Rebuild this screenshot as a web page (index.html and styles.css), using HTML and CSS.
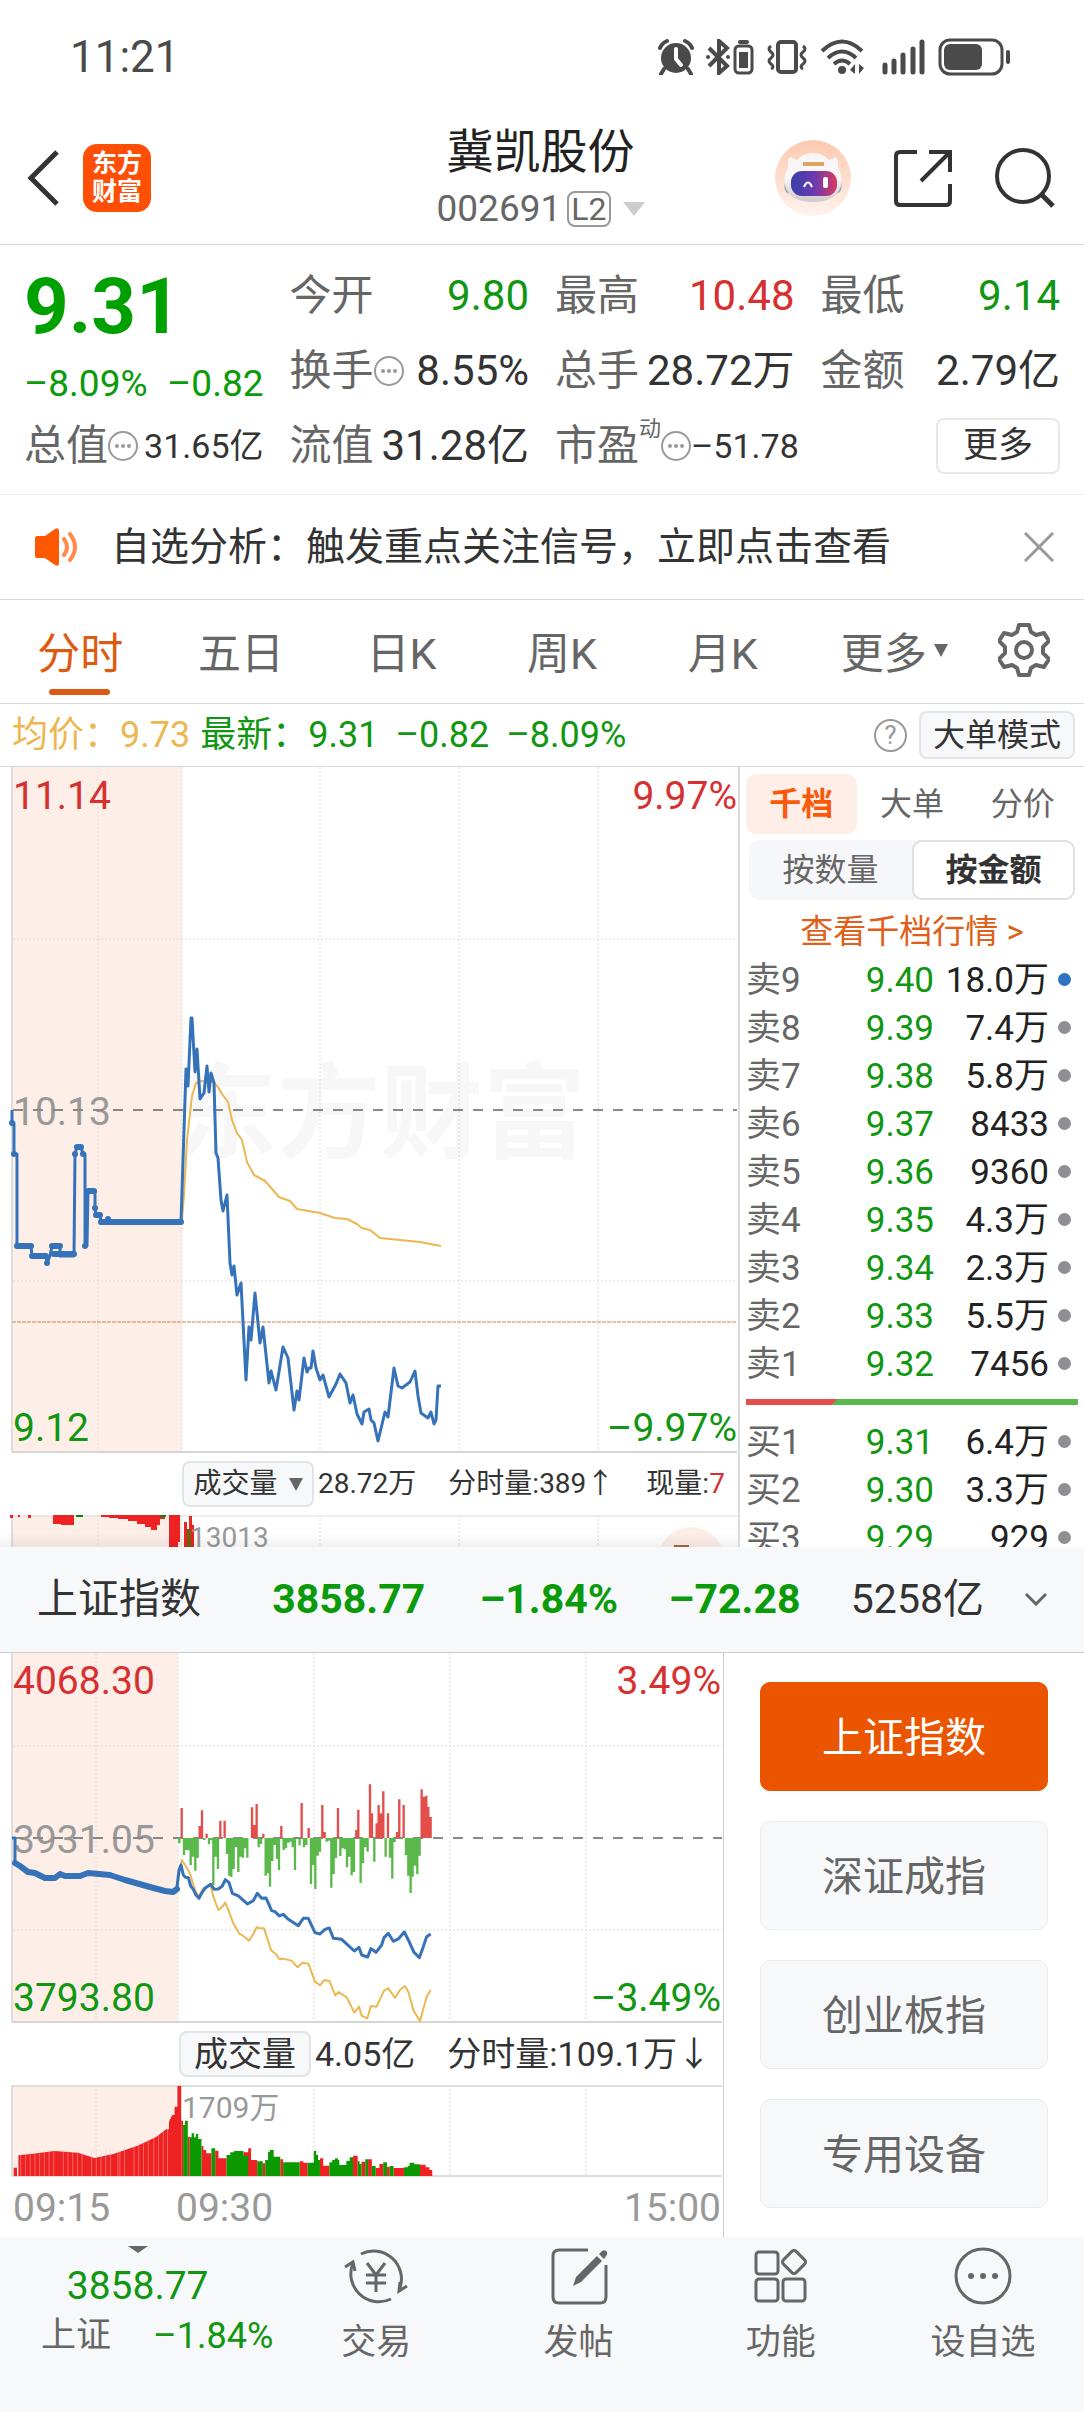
FILE: index.html
```html
<!DOCTYPE html>
<html lang="zh-CN">
<head>
<meta charset="utf-8">
<meta name="viewport" content="width=device-width, initial-scale=1">
<title>冀凯股份 002691</title>
<link rel="stylesheet" href="styles.css">
</head>
<body>
<div class="status">
  <span class="clock">11:21</span>
  <div class="status-icons">
    <svg width="36" height="36" viewBox="0 0 36 36"><circle cx="18" cy="19" r="15" fill="#4a4a4a"/><path d="M6 30l-3 5M30 30l3 5M2 9q2-5 7-7M34 9q-2-5-7-7" stroke="#4a4a4a" stroke-width="4" fill="none" stroke-linecap="round"/><path d="M18 10v10l5 6" stroke="#fff" stroke-width="4" fill="none" stroke-linecap="round"/></svg>
    <svg class="gap-m" width="48" height="36" viewBox="0 0 48 36"><path d="M3 9l18 18-8 7V2l8 7L3 27" fill="none" stroke="#4a4a4a" stroke-width="4"/><circle cx="2" cy="18" r="2" fill="#4a4a4a"/><circle cx="22" cy="18" r="2" fill="#4a4a4a"/><rect x="29" y="7" width="17" height="27" rx="4" fill="none" stroke="#4a4a4a" stroke-width="3"/><rect x="33" y="13" width="9" height="16" fill="#4a4a4a"/><rect x="32" y="1" width="11" height="4" rx="2" fill="#4a4a4a"/></svg>
    <svg class="gap-m" width="42" height="36" viewBox="0 0 42 36"><rect x="12" y="3" width="18" height="30" rx="3" fill="none" stroke="#4a4a4a" stroke-width="4"/><path d="M5 7q-4 3 0 6t0 6 0 6 0 5M37 7q4 3 0 6t0 6 0 6 0 5" fill="none" stroke="#4a4a4a" stroke-width="3"/></svg>
    <svg class="gap-m" width="44" height="36" viewBox="0 0 44 36"><path d="M2 12q20-19 40 0M8 19q14-13 28 0M14 25q8-7 16 0" fill="none" stroke="#4a4a4a" stroke-width="4"/><circle cx="22" cy="31" r="4" fill="#4a4a4a"/><path d="M30 31l5-6v10zM44 29l-5 6V25z" fill="#4a4a4a"/></svg>
    <svg class="gap-l" width="44" height="36" viewBox="0 0 44 36"><path d="M3 26v7M12 22v11M21 16v17M31 10v23M40 3v30" stroke="#4a4a4a" stroke-width="5" stroke-linecap="round"/></svg>
    <svg class="gap-m" width="74" height="38" viewBox="0 0 74 38"><rect x="2" y="2" width="62" height="34" rx="10" fill="none" stroke="#4a4a4a" stroke-width="3"/><rect x="6" y="6" width="38" height="26" rx="6" fill="#4a4a4a"/><path d="M70 14v10" stroke="#4a4a4a" stroke-width="4" stroke-linecap="round"/></svg>
  </div>
</div>

<header class="header">
  <div class="header-left">
    <button class="icon-btn" aria-label="返回"><svg width="34" height="56" viewBox="0 0 34 56"><path d="M31 2L5 28l26 26" fill="none" stroke="#333" stroke-width="5"/></svg></button>
    <a class="logo" href="#"><span>东方</span><span>财富</span></a>
  </div>
  <div class="title">
    <h1>冀凯股份</h1>
    <button class="code">002691<span class="l2">L2</span><i class="tri tri-light"></i></button>
  </div>
  <div class="header-right">
    <button class="icon-btn" aria-label="助手"><svg width="76" height="76" viewBox="0 0 76 76"><defs><linearGradient id="halo" x1="0" y1="0" x2="0" y2="1"><stop offset="0" stop-color="#fcc9af"/><stop offset="1" stop-color="#fff3ed"/></linearGradient><linearGradient id="visor"><stop offset="0" stop-color="#3a3fa8"/><stop offset=".5" stop-color="#6a3ab0"/><stop offset="1" stop-color="#d83a5e"/></linearGradient><linearGradient id="shell" x1="0" y1="0" x2="0" y2="1"><stop offset=".5" stop-color="#f8f5f7"/><stop offset="1" stop-color="#cfc8ce"/></linearGradient></defs><circle cx="38" cy="38" r="38" fill="url(#halo)"/><path d="M11 38q-5 16 6 16zM65 38q5 16-6 16z" fill="#9aa0ac"/><path d="M13 28q-1-8 2-11l7 3q6-7 16-7t16 7l7-3q3 3 2 11 5 8 3 18-5 16-28 16T10 46q-2-10 3-18z" fill="url(#shell)"/><rect x="28" y="22" width="21" height="4" fill="#dba367"/><rect x="16" y="31" width="46" height="25" rx="11" fill="url(#visor)"/><path d="M29 47q4-9 8 0" fill="none" stroke="#fff" stroke-width="2"/><rect x="48" y="37" width="5" height="11" rx="2" fill="#fff"/></svg></button>
    <button class="icon-btn" aria-label="分享"><svg width="60" height="60" viewBox="0 0 60 60"><path d="M24 4H7q-4 0-4 4v45q0 4 4 4h46q4 0 4-4V36M36 4h21v20M57 4L28 33" fill="none" stroke="#333" stroke-width="4"/></svg></button>
    <button class="icon-btn" aria-label="搜索"><svg width="60" height="60" viewBox="0 0 60 60"><circle cx="28" cy="28" r="26" fill="none" stroke="#333" stroke-width="4"/><path d="M46 46l12 12" stroke="#333" stroke-width="5"/></svg></button>
  </div>
</header>

<section class="quote">
  <div class="price"><strong>9.31</strong><div><span>–8.09%</span><span>–0.82</span></div></div>
  <div class="cell"><span>今开</span><b class="down">9.80</b></div>
  <div class="cell"><span>最高</span><b class="up">10.48</b></div>
  <div class="cell"><span>最低</span><b class="down">9.14</b></div>
  <div class="cell"><span>换手<svg class="dots" viewBox="0 0 30 30"><use href="#more-dots"/></svg></span><b>8.55%</b></div>
  <div class="cell"><span>总手</span><b>28.72万</b></div>
  <div class="cell"><span>金额</span><b>2.79亿</b></div>
  <div class="cell"><span>总值<svg class="dots" viewBox="0 0 30 30"><g id="more-dots"><circle cx="15" cy="15" r="14" fill="none" stroke="#999" stroke-width="2"/><circle cx="9" cy="15" r="2" fill="#999"/><circle cx="15" cy="15" r="2" fill="#999"/><circle cx="21" cy="15" r="2" fill="#999"/></g></svg></span><b class="small">31.65亿</b></div>
  <div class="cell"><span>流值</span><b>31.28亿</b></div>
  <div class="cell"><span>市盈<sup>动</sup><svg class="dots" viewBox="0 0 30 30"><use href="#more-dots"/></svg></span><b class="small">–51.78</b></div>
  <div class="cell cell-end"><button class="more">更多</button></div>
</section>

<section class="notice">
  <svg width="46" height="38" viewBox="0 0 46 38"><path d="M2 10q0-2 2-2h8L22 1q4-2 4 2v32q0 4-4 2l-10-7H4q-2 0-2-2z" fill="#ff5800"/><path d="M31 11q6 8 0 16M37 6q10 13 0 26" fill="none" stroke="#ff8a4a" stroke-width="4" stroke-linecap="round"/></svg>
  <a href="#">自选分析：触发重点关注信号，立即点击查看</a>
  <button class="icon-btn" aria-label="关闭"><svg width="30" height="30" viewBox="0 0 30 30"><path d="M1 1l28 28M29 1L1 29" stroke="#999" stroke-width="3"/></svg></button>
</section>

<nav class="tabs">
  <button class="active">分时</button>
  <button>五日</button>
  <button>日K</button>
  <button>周K</button>
  <button>月K</button>
  <button>更多<i class="tri tri-dark"></i></button>
  <button aria-label="设置"><svg width="52" height="54" viewBox="0 0 52 54"><path d="M21 2h10l2 7 5 3 8-2 5 8-6 6v6l6 6-5 8-8-2-5 3-2 7H21l-2-7-5-3-8 2-5-8 6-6v-6l-6-6 5-8 8 2 5-3z" fill="none" stroke="#666" stroke-width="4" stroke-linejoin="round"/><circle cx="26" cy="27" r="8" fill="none" stroke="#666" stroke-width="4"/></svg></button>
</nav>

<div class="info">
  <span class="avg">均价：9.73</span>
  <span class="down latest"><span>最新：9.31</span><span>–0.82</span><span>–8.09%</span></span>
  <button class="help" aria-label="帮助">?</button>
  <button class="mode">大单模式</button>
</div>

<main class="board">
  <div class="board-chart">
    <svg class="chart" viewBox="0 767 738 686" role="img" aria-label="冀凯股份分时图">
      <rect x="13" y="767" width="169" height="685" fill="#fdeee8"/>
      <text x="174" y="1150" class="mark">东方财富</text>
      <path class="grid" d="M98 767V1452M182 767V1452M320 767V1452M459 767V1452M598 767V1452M13 939H737M13 1281H737"/>
      <path d="M12 767V1452" stroke="#ddd" stroke-width="2"/>
      <path d="M12 1452H737" stroke="#d5d5d5" stroke-width="2"/>
      <text x="13" y="1125" class="mid">10.13</text>
      <path d="M13 1110H737" stroke="#888" stroke-width="2" stroke-dasharray="10 10"/>
      <path d="M12 1322H737" stroke="#c8854c" stroke-width="1" stroke-dasharray="4 1"/>
      <path class="avg-line" d="M182 1220L184 1195 187 1140 192 1096 196 1083 201 1081 213 1082 218 1087 222 1094 228 1102 232 1120 237 1133 242 1140 247 1162 254 1175 265 1181 279 1197 290 1201 297 1209 320 1213 335 1218 347 1219 357 1224 362 1228 370 1230 380 1238 400 1240 420 1242 441 1246"/>
      <path class="price-line" d="M12 1110V1123H14V1154H17V1246H31L32 1256H46L47 1263 50 1256 52 1246H60V1256H74L75 1154 77 1147H81L83 1154H85V1246H87L88 1191H95V1208L96 1215H100L101 1222H181L186 1069 188 1086 191 1018 192 1018 195 1072 197 1049 200 1099 204 1093 207 1066 209 1092 211 1073 214 1083 216 1153 218 1158 221 1200 223 1211 227 1195 230 1263 232 1275 234 1266 237 1295 241 1283 246 1380 249 1327 251 1340 255 1293 260 1343 263 1327 269 1383 271 1371 276 1390 283 1347 288 1358 294 1410 297 1391 299 1400 304 1358 307 1372 309 1368 311 1368 313 1351 316 1368 320 1380 323 1375 329 1397 336 1384 340 1374 346 1383 350 1403 353 1395 357 1414 362 1424 364 1412 369 1409 371 1420 374 1423 378 1441 385 1412 388 1417 394 1368 398 1386 402 1388 410 1382 415 1371 418 1396 421 1413 428 1418 431 1412 434 1424 436 1420 438 1386 441 1386"/>
      <path class="dots-line" d="M12 1123h0M14 1154h0M17 1246H31M32 1256H46M47 1263h0M52 1246H60M54 1254H74M75 1154h0M77 1147H81M83 1154h0M85 1246h0M88 1191H94M95 1208h0M96 1215H100M101 1222H181M108 1219h0"/>
      <text x="13" y="809" class="axis red">11.14</text>
      <text x="737" y="809" class="axis red end">9.97%</text>
      <text x="13" y="1441" class="axis green">9.12</text>
      <text x="737" y="1441" class="axis green end">–9.97%</text>
    </svg>
    <div class="vol-head">
      <button class="chip">成交量<i class="tri tri-dark"></i></button>
      <span>28.72万</span><span class="gap-xl">分时量:389↑</span><span class="gap-xl">现量:<em>7</em></span>
    </div>
    <svg class="chart" viewBox="0 1515 738 32" role="img" aria-label="成交量">
      <defs><linearGradient id="fade" x1="0" y1="0" x2="0" y2="1"><stop offset="0" stop-color="#000" stop-opacity="0"/><stop offset="1" stop-color="#000" stop-opacity=".06"/></linearGradient></defs>
      <rect x="13" y="1515" width="169" height="32" fill="#fdeee8"/>
      <path class="grid" d="M98 1515V1547M182 1515V1547M320 1515V1547M459 1515V1547M598 1515V1547"/>
      <path d="M12 1515V1547" stroke="#ddd" stroke-width="2"/>
      <path d="M12 1516H738" stroke="#ddd"/>
      <path fill="#ee2222" d="M10 1515h3v3h-3zM18 1515h2v2h-2zM28 1515h3v3h-3zM53 1515h21v10H61v-1h-8zM101 1515H165V1519H160V1525H157V1530H151V1527H145V1524H137V1521H128V1519H118V1518H109V1517H101zM169 1515h11v27h-2v5h-9zM184 1522h3v25h-3zM189 1516h3v9h2v22h-5z"/>
      <path fill="#008a00" d="M76 1515h7v2h-7zM160 1515h6v2h-6z"/><path fill="#6d6412" d="M187 1529h4v18h-4z"/>
      <text x="190" y="1547" class="tick">13013</text>
      <circle cx="691" cy="1560" r="33" fill="#fdeee8"/><rect x="674" y="1545" width="15" height="2" fill="#a5683e"/>
      <rect x="0" y="1533" width="738" height="14" fill="url(#fade)"/>
    </svg>
  </div>

  <aside class="book">
    <div class="book-tabs"><button class="active">千档</button><button>大单</button><button>分价</button></div>
    <div class="segment"><button>按数量</button><button class="active">按金额</button></div>
    <a class="book-link" href="#">查看千档行情 &gt;</a>
    <table>
      <tr><th>卖9</th><td class="down">9.40</td><td>18.0万</td><td><i class="dot blue"></i></td></tr>
      <tr><th>卖8</th><td class="down">9.39</td><td>7.4万</td><td><i class="dot"></i></td></tr>
      <tr><th>卖7</th><td class="down">9.38</td><td>5.8万</td><td><i class="dot"></i></td></tr>
      <tr><th>卖6</th><td class="down">9.37</td><td>8433</td><td><i class="dot"></i></td></tr>
      <tr><th>卖5</th><td class="down">9.36</td><td>9360</td><td><i class="dot"></i></td></tr>
      <tr><th>卖4</th><td class="down">9.35</td><td>4.3万</td><td><i class="dot"></i></td></tr>
      <tr><th>卖3</th><td class="down">9.34</td><td>2.3万</td><td><i class="dot"></i></td></tr>
      <tr><th>卖2</th><td class="down">9.33</td><td>5.5万</td><td><i class="dot"></i></td></tr>
      <tr><th>卖1</th><td class="down">9.32</td><td>7456</td><td><i class="dot"></i></td></tr>
    </table>
    <div class="ratio"></div>
    <table>
      <tr><th>买1</th><td class="down">9.31</td><td>6.4万</td><td><i class="dot"></i></td></tr>
      <tr><th>买2</th><td class="down">9.30</td><td>3.3万</td><td><i class="dot"></i></td></tr>
      <tr><th>买3</th><td class="down">9.29</td><td>929</td><td><i class="dot"></i></td></tr>
    </table>
  </aside>
</main>

<section class="index-bar">
  <span>上证指数</span><b>3858.77</b><b>–1.84%</b><b>–72.28</b><span>5258亿</span>
  <button class="icon-btn" aria-label="收起"><svg width="24" height="14" viewBox="0 0 24 14"><path d="M2 2l10 10L22 2" fill="none" stroke="#666" stroke-width="3"/></svg></button>
</section>

<section class="index">
  <div class="index-chart">
    <svg class="chart" viewBox="0 1653 723 370" role="img" aria-label="上证指数分时图">
      <rect x="13" y="1653" width="165" height="369" fill="#fdeee8"/>
      <path class="grid" d="M96 1653V2022M178 1653V2022M314 1653V2022M450 1653V2022M586 1653V2022M13 1746H722M13 1930H722"/>
      <path d="M12 1653V2022" stroke="#ddd" stroke-width="2"/>
      <path d="M12 2022H722" stroke="#d5d5d5" stroke-width="2"/>
      <text x="13" y="1853" class="mid">3931.05</text>
      <path d="M13 1838H722" stroke="#888" stroke-width="2" stroke-dasharray="10 10"/>
      <g transform="translate(160 1760) scale(.3333)">
        <path stroke="#5ab94a" stroke-width="7" d="M58 234V250M72 234V285M79 234V270M85 234V270M92 234V315M99 234V290M106 234V332M113 234V294M133 234V240M147 234V253M153 234V240M160 234V375M167 234V290M174 234V327M201 234V282M208 234V347M214 234V351M221 234V327M228 234V262M235 234V336M242 234V290M249 234V293M255 234V265M262 234V293M296 234V262M303 234V252M317 234V347M323 234V340M330 234V380M337 234V303M344 234V255M351 234V297M357 234V330M371 234V270M378 234V265M385 234V248M391 234V245M398 234V262M405 234V330M419 234V256M432 234V262M439 234V255M453 234V372M460 234V315M466 234V387M473 234V287M480 234V275M500 234V245M507 234V242M514 234V383M521 234V342M528 234V295M541 234V288M548 234V265M555 234V268M561 234V322M568 234V290M575 234V346M582 234V336M602 234V369M609 234V310M616 234V262M623 234V275M643 234V305M677 234V290M690 234V293M697 234V356M704 234V246M724 234V238M738 234V285M745 234V347M752 234V399M758 234V350M765 234V317M772 234V342M779 234V287"/>
        <path stroke="#e34d4a" stroke-width="7" d="M65 234V144M119 234V198M126 234V151M140 234V221M181 234V182M194 234V182M276 234V142M283 234V195M290 234V132M310 234V221M364 234V198M425 234V129M446 234V204M487 234V135M494 234V216M534 234V144M589 234V210M595 234V149M630 234V73M636 234V160M650 234V190M656 234V135M663 234V160M670 234V94M684 234V160M711 234V216M718 234V118M731 234V135M785 234V88M792 234V110M799 234V107M805 234V140M812 234V171"/>
        <path fill="none" stroke="#ecb751" stroke-width="6" stroke-linejoin="round" d="M52 375L65 300 75 315 90 340 100 375 108 397 117 408 130 385 152 375 160 410 175 450 187 440 196 428 205 450 220 490 237 520 250 528 267 542 280 522 290 502 300 505 312 505 325 545 333 570 350 585 358 598 368 596 395 602 413 622 427 608 445 611 465 665 480 676 492 661 508 662 526 706 536 696 560 712 583 758 597 740 605 767 622 775 633 738 650 740 672 692 685 685 705 714 720 690 735 678 745 695 760 750 780 784 800 710 812 690"/>
        <path fill="none" stroke="#3672b9" stroke-width="9" stroke-linejoin="round" d="M50 390L57 330 63 315 70 345 76 352 85 353 92 378 100 388 108 405 117 415 126 398 135 385 152 373 163 388 175 387 187 378 196 359 207 368 217 400 235 408 262 432 280 422 292 400 305 415 318 414 335 452 345 455 358 468 370 463 385 478 415 497 430 475 445 475 465 518 480 522 495 508 508 504 520 535 545 538 583 573 597 562 605 585 623 591 633 566 648 577 665 555 672 533 685 520 700 544 715 537 733 516 745 540 762 577 778 593 790 560 800 530 812 522"/>
      </g>
      <path class="price-line" d="M12 1838H15V1863"/>
      <path class="dots-line" d="M15 1863L20 1866 28 1872 35 1873 45 1878 55 1878 60 1874 65 1876 80 1876 88 1873 110 1875 125 1880 150 1887 165 1891 173 1892 177 1889"/>
      <text x="13" y="1694" class="axis red">4068.30</text>
      <text x="721" y="1694" class="axis red end">3.49%</text>
      <text x="13" y="2011" class="axis green">3793.80</text>
      <text x="721" y="2011" class="axis green end">–3.49%</text>
    </svg>
    <div class="vol-head vol-head-lg">
      <button class="chip">成交量</button>
      <span>4.05亿</span><span class="gap-xl">分时量:109.1万↓</span>
    </div>
    <svg class="chart" viewBox="0 2085 723 152" role="img" aria-label="上证成交量">
      <rect x="13" y="2085" width="165" height="91" fill="#fdeee8"/>
      <path class="grid" d="M96 2085V2176M178 2085V2176M314 2085V2176M450 2085V2176M586 2085V2176"/>
      <path d="M12 2085V2176" stroke="#ddd" stroke-width="2"/>
      <path d="M12 2086H722M12 2176H722" stroke="#ddd" stroke-width="2"/>
      <g transform="translate(0 2000) scale(.4719 .3333)">
        <path fill="#ee2222" d="M29 503h7v25h-7zM39 528V466L70 461 115 453 165 458 200 474 240 462 290 438 330 412 352 388H358V365L365 345H370V320H376V258H384V528z"/>
        <path stroke="#f9c9c3" stroke-width="1" d="M44 455V528M54 455V528M64 455V528M74 455V528M84 450V528M94 450V528M104 450V528M114 450V528M134 450V528M144 450V528M154 450V528M164 450V528M174 450V528M194 450V528M204 450V528M214 450V528M224 450V528M234 450V528M250 450V528M254 450V528M264 440V528M284 440V528M294 430V528M304 430V528M314 420V528M326 410V528M336 400V528M346 390V528M355 380V528"/>
        <path fill="#ee2222" d="M384 528V362h4V528zM398 528V410h4V528zM427 528V438h4V450h6V460h11V528zM456 528V452h7V475h17V528zM516 528V457h10V445h6V480h13V528zM557 528V490h5V528zM594 528V478h6V528zM635 528V484h8V488h9V528zM678 528V475h7V497h13V528zM748 528V467h10V528zM766 528V485h8V528zM780 528V478h8V528zM796 528V504h8V492h8V528zM820 528V500h6V528zM834 528V504h22V528zM890 528V494h12V502h8V510h6V528z"/>
        <path fill="#0a9a00" d="M388 528V375h4V362h6V528zM402 528V412h4V400h5V412h4V402h5V417h7V528zM448 528V445h8V528zM480 528V465h8V457h8V453h20V467H526V528zM545 528V484h12V528zM562 528V480h6V455h4V450h8V470h14V528zM600 528V487h35V528zM652 528V488h13V453h5V465h4V480h4V528zM698 528V487h6V480h6V475h6V480h3V495h15V483h7V472h7V528zM758 528V484h4V492h4V528zM774 528V478h6V528zM788 528V498h8V528zM812 528V487h8V528zM826 528V498h8V528zM856 528V502h8V498h4V488h10V493h12V528z"/>
      </g>
      <text x="182" y="2118" class="tick tick-lg">1709万</text>
      <text x="13" y="2221" class="mid">09:15</text>
      <text x="176" y="2221" class="mid">09:30</text>
      <text x="721" y="2221" class="mid end">15:00</text>
    </svg>
  </div>
  <div class="index-list">
    <button class="active">上证指数</button>
    <button>深证成指</button>
    <button>创业板指</button>
    <button>专用设备</button>
  </div>
</section>

<footer class="dock">
  <a class="dock-index" href="#"><i class="tri tri-dark"></i><span class="down">3858.77</span><span class="dock-row"><span>上证</span><span class="down">–1.84%</span></span></a>
  <a href="#"><svg width="64" height="60" viewBox="0 0 64 60"><path d="M17 8A28 28 0 0 1 56 42M47 53A28 28 0 0 1 9 17" fill="none" stroke="#666" stroke-width="3"/><path d="M1 21l8-5 2 9M63 40l-8 5 1-9" fill="none" stroke="#666" stroke-width="3"/><path d="M23 17l9 12 9-12M22 29h20M22 37h20M32 29v17" fill="none" stroke="#666" stroke-width="3"/></svg>交易</a>
  <a href="#"><svg width="60" height="60" viewBox="0 0 60 60"><path d="M39 4H10Q4 4 4 10v41q0 6 6 6h41q6 0 6-6V19" fill="none" stroke="#666" stroke-width="3"/><path d="M24 40l3-9L48 10l5 5-21 21zM50 8l3-3q3-2 5 1 1 2-1 4l-2 3z" fill="#666"/></svg>发帖</a>
  <a href="#"><svg width="60" height="60" viewBox="0 0 60 60"><g fill="none" stroke="#666" stroke-width="3"><rect x="5" y="6" width="22" height="22" rx="3"/><rect x="5" y="33" width="22" height="22" rx="3"/><rect x="32" y="33" width="22" height="22" rx="3"/><rect x="34" y="7" width="18" height="18" rx="3" transform="rotate(45 43 16)"/></g></svg>功能</a>
  <a href="#"><svg width="60" height="60" viewBox="0 0 60 60"><circle cx="30" cy="30" r="27" fill="none" stroke="#666" stroke-width="3"/><circle cx="18" cy="30" r="3" fill="#666"/><circle cx="30" cy="30" r="3" fill="#666"/><circle cx="42" cy="30" r="3" fill="#666"/></svg>设自选</a>
</footer>
</body>
</html>
```
FILE: styles.css
```css
* { box-sizing: border-box; }
body { display: flex; flex-direction: column; min-height: 100vh; margin: 0; background: #fff; color: #333; font-family: Roboto, "Noto Sans CJK SC", sans-serif; }
button { margin: 0; padding: 0; border: 0; background: none; font: inherit; color: inherit; }
a { color: inherit; text-decoration: none; }
svg { display: block; flex: none; }
b { font-weight: 400; }
em { font-style: normal; color: #d63030; }
.up { color: #d63030; }
.down { color: #109610; }
.icon-btn { display: flex; }
.tri { width: 0; height: 0; border: solid transparent; border-width: 13px 7px 0; border-top-color: #666; }
.tri-light { border-width: 14px 11px 0; border-top-color: #ccc; }

.status { display: flex; align-items: center; justify-content: space-between; height: 114px; padding: 0 72px 0 70px; color: #4a4a4a; }
.clock { font-size: 44px; line-height: 52px; }
.status-icons { display: flex; align-items: center; }
.gap-m { margin-left: 12px; }
.gap-l { margin-left: 18px; }

.header { display: grid; grid-template-columns: 1fr auto 1fr; align-items: center; padding: 7px 29px 9px 26px; border-bottom: 1px solid #d8d8d8; }
.header-left, .header-right { display: flex; align-items: center; }
.header-left { gap: 23px; }
.header-right { justify-content: flex-end; gap: 42px; }
.logo { display: flex; flex-direction: column; align-items: center; justify-content: center; width: 68px; height: 68px; border-radius: 14px; background: #ff4f06; color: #fff; font-size: 25px; font-weight: 700; line-height: 28px; }
.title { display: flex; flex-direction: column; align-items: center; }
.title h1 { margin: 0; font-size: 47px; font-weight: 400; line-height: 62px; color: #222; }
.code { display: flex; align-items: center; font-size: 37px; line-height: 52px; color: #666; }
.l2 { margin: 0 12px 0 6px; padding: 0 2px; border: 2px solid #999; border-radius: 8px; font-size: 32px; line-height: 32px; }

.quote { display: grid; grid-template-columns: repeat(4, minmax(0, 1fr)); grid-auto-rows: 75px; column-gap: 26px; padding: 13px 24px 11px; border-bottom: 1px solid #eee; }
.price { grid-row: span 2; display: flex; flex-direction: column; color: #0a9a0a; }
.price strong { font-size: 78px; line-height: 98px; color: #00a000; }
.price div { display: flex; justify-content: space-between; font-size: 37px; line-height: 56px; }
.cell { display: flex; align-items: center; justify-content: space-between; font-size: 42px; line-height: 60px; white-space: nowrap; }
.cell > span { display: flex; align-items: center; color: #666; }
.cell .small { font-size: 34px; }
.cell sup { align-self: flex-start; font-size: 22px; line-height: 26px; }
.cell-end { justify-content: flex-end; }
.dots { width: 30px; height: 30px; }
.more { width: 124px; height: 56px; border: 2px solid #e8e8e8; border-radius: 8px; font-size: 35px; line-height: 50px; }

.notice { display: flex; align-items: center; gap: 32px; padding: 22px 30px 22px 33px; border-bottom: 1px solid #d8d8d8; font-size: 39px; line-height: 60px; }
.notice a { flex: 1; }

.tabs { display: grid; grid-template-columns: repeat(5, 160fr) 182fr 76fr; padding-right: 22px; border-bottom: 1px solid #d8d8d8; }
.tabs button { position: relative; display: flex; align-items: center; justify-content: center; gap: 7px; height: 103px; padding-bottom: 3px; font-size: 43px; color: #666; }
.tabs .active { color: #dd5a12; }
.tabs .active::after { content: ""; position: absolute; bottom: 8px; left: calc(50% - 31px); width: 61px; height: 6px; border-radius: 3px; background: #dd5a12; }

.info { display: flex; align-items: center; padding: 7px 9px 7px 12px; border-bottom: 1px solid #d8d8d8; font-size: 36px; line-height: 48px; }
.avg { margin-right: 10px; color: #ecb751; }
.latest { display: flex; flex: 1; gap: 17px; }
.help { width: 33px; height: 33px; margin-right: 12px; border: 2px solid #999; border-radius: 50%; font-size: 26px; line-height: 28px; color: #999; }
.mode { width: 156px; height: 48px; border: 2px solid #e2e4e8; border-radius: 8px; background: #f7f8fa; font-size: 32px; line-height: 42px; }

.board { display: grid; grid-template-columns: minmax(0, 738fr) minmax(0, 346fr); }
.chart { width: 100%; height: auto; }
.grid { fill: none; stroke: #dcdcdc; stroke-width: 1; stroke-dasharray: 2 2; }
.price-line, .avg-line, .dots-line { fill: none; stroke: #3672b9; stroke-width: 3; stroke-linejoin: round; }
.avg-line { stroke: #ecb751; stroke-width: 2; }
.dots-line { stroke-width: 6; stroke-linecap: round; }
.axis, .mid { font-size: 39px; }
.mid, .tick { fill: #999; }
.red { fill: #d63030; }
.green { fill: #109610; }
.end { text-anchor: end; }
.tick { font-size: 28px; }
.tick-lg { font-size: 30px; }
.mark { font-size: 103px; font-weight: 700; fill: #f7f7f7; }
.vol-head { display: flex; align-items: center; padding: 8px 0; padding-left: 182px; font-size: 28px; line-height: 46px; white-space: nowrap; }
.vol-head .chip { display: flex; align-items: center; justify-content: center; gap: 11px; width: 132px; height: 46px; margin-right: 4px; border: 2px solid #e2e4e8; border-radius: 8px; background: #f7f8fa; }
.vol-head .gap-xl { margin-left: 32px; }
.vol-head-lg { padding-left: 179px; font-size: 34px; }

.book { contain: size; overflow: hidden; padding: 7px 6px 0; border-left: 2px solid #dcdcdc; }
.book-tabs { display: grid; grid-template-columns: repeat(3, 1fr); font-size: 32px; line-height: 60px; color: #666; }
.book-tabs .active { border-radius: 10px; background: #feeee7; font-weight: 700; color: #f95a0a; }
.segment { display: grid; grid-template-columns: 1fr 1fr; margin: 6px 3px; border-radius: 10px; background: #f6f7fa; font-size: 32px; line-height: 56px; color: #666; }
.segment button { height: 60px; }
.segment .active { border: 2px solid #e0e0e0; border-radius: 10px; background: #fff; font-weight: 700; color: #333; }
.book-link { display: block; padding: 3px 0; font-size: 33px; line-height: 45px; text-align: center; color: #e0601a; }
.book table { width: 100%; table-layout: fixed; border-collapse: collapse; font-size: 35px; line-height: 48px; color: #222; }
.book th, .book td { height: 48px; padding: 0; font-weight: 400; text-align: right; white-space: nowrap; }
.book th { width: 75px; text-align: left; color: #666; }
.book td:last-child { width: 29px; }
.book td:nth-child(2) { width: 113px; }
.book .down { color: #109610; }
.dot { display: block; width: 13px; height: 13px; margin: 0 7px 4px auto; border-radius: 50%; background: #8e8e93; }
.blue { background: #2f72c4; }
.ratio { height: 6px; margin: 10px 0 14px; background: linear-gradient(135deg, #e34d4a 0 27%, #5ab94a 27%); }

.index-bar { display: grid; grid-template-columns: 235fr 207fr 189fr 182fr 173fr 24fr; align-items: center; padding: 22px 36px 23px 37px; border-bottom: 1px solid #ccc; background: #f7f8fa; font-size: 41px; line-height: 60px; white-space: nowrap; }
.index-bar b { font-weight: 700; color: #0a9a0a; }

.index { display: grid; grid-template-columns: minmax(0, 724fr) minmax(0, 360fr); }
.index-chart { border-right: 1px solid #ccc; }
.index-list { display: grid; gap: 30px; padding: 29px 36px; }
.index-list button { padding-bottom: 5px; border: 1px solid #ececec; border-radius: 10px; background: #f7f8fa; font-size: 41px; color: #666; }
.index-list .active { border-color: #eb5500; background: #eb5500; color: #fff; }

.dock { flex: 1; display: grid; grid-template-columns: 275fr repeat(4, 202fr); background: #f7f8fa; font-size: 35px; line-height: 50px; color: #666; }
.dock a { display: flex; flex-direction: column; align-items: center; gap: 12px; padding: 9px 0 43px; }
.dock .dock-index { gap: 0; }
.dock-index .tri { border-width: 7px 10px 0; }
.dock-index > .down { margin-top: 8px; font-size: 39px; }
.dock-row { display: flex; justify-content: space-between; width: 100%; padding: 0 2px 0 41px; }
.dock-row .down { font-size: 36px; }
```
